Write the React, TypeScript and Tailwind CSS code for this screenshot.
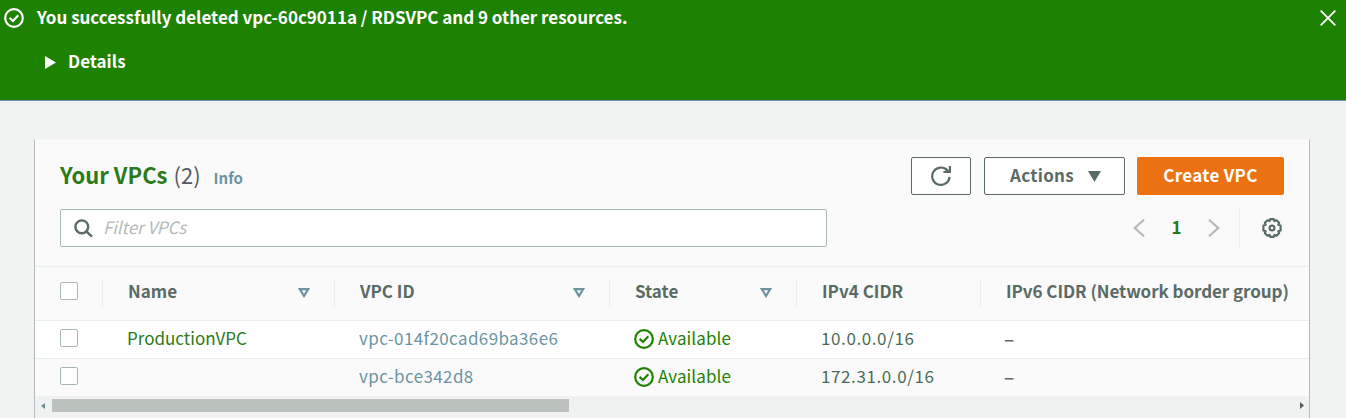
import type { ReactNode } from "react";

function StatusIcon({ className }: { className: string }) {
  return (
    <svg className={className} viewBox="0 0 20 20" fill="none" stroke="currentColor" strokeWidth="2.2">
      <circle cx="10" cy="10" r="8.8" />
      <path d="M5.6 9.9 9 13l5.3-5.7" />
    </svg>
  );
}

function SortIcon() {
  return (
    <svg className="mb-px h-[10px] w-[12px] text-[#6b94a0]" viewBox="0 0 12 10" fill="none" stroke="currentColor" strokeWidth="2.2">
      <path d="M1.8 1.1h8.4L6 8z" />
    </svg>
  );
}

function Checkbox({ label }: { label: string }) {
  return (
    <input
      type="checkbox"
      aria-label={label}
      className="block h-[18px] w-[18px] shrink-0 appearance-none rounded-[2px] border border-[#aab7b8] bg-white"
    />
  );
}

function HeaderCell({ children, sortable }: { children: ReactNode; sortable?: boolean }) {
  return (
    <div className="flex h-[27px] items-center justify-between border-l border-[#eaeded] pr-6 pl-[25px]">
      <span className="pb-[5px] whitespace-nowrap">{children}</span>
      {sortable && <SortIcon />}
    </div>
  );
}

const columns = "grid grid-cols-[67px_232px_275px_187px_184px_329px]";

const vpcs = [
  { name: "ProductionVPC", id: "vpc-014f20cad69ba36e6", cidr: "10.0.0.0/16" },
  { name: "", id: "vpc-bce342d8", cidr: "172.31.0.0/16" },
];

export default function App() {
  return (
    <div className="flex h-[418px] w-[1346px] flex-col overflow-hidden bg-[#f1f3f3] font-['Noto_Sans_CJK_SC',sans-serif] text-[17px] text-[#545b64]">
      <header className="flex h-[101px] shrink-0 items-start border-b border-[#6b94a0] bg-[#1d8102] pr-[10px] pl-1 font-bold text-white">
        <StatusIcon className="mt-2 h-5 w-5" />
        <div className="ml-[13px] flex-1">
          <p className="mt-[5px] leading-6 tracking-[-0.015px]">You successfully deleted vpc-60c9011a / RDSVPC and 9 other resources.</p>
          <button className="mt-5 ml-2 flex items-center leading-6">
            <svg className="mt-[2px] mr-3 h-[13px] w-[11px]" viewBox="0 0 11 13" fill="currentColor">
              <path d="M0 0 11 6.5 0 13z" />
            </svg>
            Details
          </button>
        </div>
        <button aria-label="Dismiss" className="mt-[10px]">
          <svg className="h-4 w-4" viewBox="0 0 16 16" fill="none" stroke="currentColor" strokeWidth="1.8">
            <path d="m.7.7 14.6 14.6M15.3.7.7 15.3" />
          </svg>
        </button>
      </header>

      <main className="mt-[38px] ml-[34px] flex h-[279px] w-[1276px] shrink-0 flex-col border-x border-t border-x-[#b5bcbd] border-t-[#f6f7f7] bg-[#fafafa]">
        <div className="flex h-[55px] items-start justify-between px-[25px] pt-[17px]">
          <div className="flex items-baseline leading-[34px]">
            <h1 className="text-[22px] font-bold text-[#2b7a1b]">Your VPCs</h1>
            <span className="ml-[6px] text-[22px]">(2)</span>
            <a className="ml-[13px] text-[15px] font-bold text-[#6b94a0]">Info</a>
          </div>
          <div className="flex h-[38px] font-bold tracking-[0.3px]">
            <button aria-label="Refresh" className="flex w-[60px] items-center justify-center rounded-[2px] border border-[#5a6b66] bg-white">
              <svg className="h-5 w-5" viewBox="0 0 20 20" fill="none" stroke="#5a6b66" strokeWidth="2.2">
                <path d="M18.6 10.8A8.7 8.7 0 1 1 16.4 4.4" />
                <path d="M18.9 0v6h-6.5M14.6 3l3.8 3" />
              </svg>
            </button>
            <button className="ml-[13px] flex w-[141px] items-center rounded-[2px] border border-[#5a6b66] bg-white pl-[25px] text-[#5a6b66]">
              <span className="pb-[3px]">Actions</span>
              <svg className="mt-px ml-[14px] h-[11px] w-[13px]" viewBox="0 0 13 11" fill="currentColor">
                <path d="M0 0h13L6.5 11z" />
              </svg>
            </button>
            <button className="ml-3 w-[147px] rounded-[2px] bg-[#ec7211] pb-[3px] text-white">Create VPC</button>
          </div>
        </div>

        <div className="mt-[14px] flex h-[38px] shrink-0 items-center justify-between px-[25px]">
          <div className="flex h-[38px] w-[767px] items-center rounded-[2px] border border-[#aab7b8] bg-white pl-[13px]">
            <svg className="h-[19px] w-[19px]" viewBox="0 0 19 19" fill="none" stroke="#5a6b66" strokeWidth="2.4">
              <circle cx="7.8" cy="7.8" r="6.4" />
              <path d="m12.3 12.3 5.7 5.4" />
            </svg>
            <input className="ml-[10px] w-60 bg-transparent pb-[2px] tracking-[-0.1px] italic outline-none placeholder:text-[#b3bbb8]" placeholder="Filter VPCs" />
          </div>
          <div className="flex items-center">
            <svg className="h-[18px] w-3" viewBox="0 0 12 18" fill="none" stroke="#b3bbb8" strokeWidth="2.2">
              <path d="M11 .8 1.8 9l9.2 8.2" />
            </svg>
            <span className="w-[63px] pb-[2px] text-center font-bold text-[#2b7a1b]">1</span>
            <svg className="h-[18px] w-3" viewBox="0 0 12 18" fill="none" stroke="#b3bbb8" strokeWidth="2.2">
              <path d="M1 .8 10.2 9 1 17.2" />
            </svg>
            <div className="ml-[19px] flex h-[38px] items-center border-l border-[#eaeded] pr-[2px] pl-[22px]">
              <svg className="h-5 w-5" viewBox="0 0 20 20" fill="none" stroke="#5a6b66" strokeWidth="2.2" strokeLinejoin="round">
                <path d="M8.3 1.1h3.4l.7 2 2.1-.9 2.6 2.6-.8 2 2.3.8v4.8l-2.3.8.8 2-2.6 2.6-2.1-.9-.7 2H8.3l-.7-2-2.1.9-2.6-2.6.8-2-2.3-.8V7.6l2.3-.8-.8-2 2.6-2.6 2.1.9z" />
                <circle cx="10" cy="10" r="2.4" />
              </svg>
            </div>
          </div>
        </div>

        <div className={`${columns} mt-[19px] h-[55px] shrink-0 items-center border-y border-[#eaeded] font-bold text-[#5a6b66]`}>
          <div className="pb-[6px] pl-[25px]"><Checkbox label="Select all" /></div>
          <HeaderCell sortable>Name</HeaderCell>
          <HeaderCell sortable>VPC ID</HeaderCell>
          <HeaderCell sortable>State</HeaderCell>
          <HeaderCell>IPv4 CIDR</HeaderCell>
          <HeaderCell><span className="tracking-[-0.06px]">IPv6 CIDR (Network border group)</span></HeaderCell>
        </div>

        {vpcs.map((vpc, index) => (
          <div key={vpc.id} className={`${columns} shrink-0 items-center pb-px ${index === 0 ? "h-[38px] border-b border-[#eaeded] bg-white" : "h-[37px]"}`}>
            <div className="pb-[2px] pl-[25px]"><Checkbox label={`Select ${vpc.id}`} /></div>
            <span className="pb-[2px] pl-[25px] text-[#2b7a1b]">{vpc.name}</span>
            <a className="pb-[2px] pl-[25px] tracking-[0.38px] text-[#6b94a0]">{vpc.id}</a>
            <span className="flex items-center pl-[25px] tracking-[0.1px] text-[#1d8102]">
              <StatusIcon className="mr-1 h-5 w-5" />
              <span className="pb-[2px]">Available</span>
            </span>
            <span className="pb-[2px] pl-[25px] tracking-[0.6px] text-[#4a6b55]">{vpc.cidr}</span>
            <span className="pb-[2px] pl-6 text-[19px] font-medium text-[#5a6b66]">–</span>
          </div>
        ))}

        <div className="flex h-[23px] shrink-0 items-start bg-[#f0f2f2] pt-[3px]">
          <svg className="mt-1 ml-[6px] h-[6px] w-1" viewBox="0 0 4 6" fill="#6b8a90"><path d="M4 0v6L0 3z" /></svg>
          <div className="ml-[7px] h-[13px] w-[517px] bg-[#bbc2bd]" />
          <svg className="mt-[3px] mr-[5px] ml-auto h-[7px] w-1" viewBox="0 0 4 7" fill="#545b64"><path d="M0 0v7l4-3.5z" /></svg>
        </div>
      </main>
    </div>
  );
}
